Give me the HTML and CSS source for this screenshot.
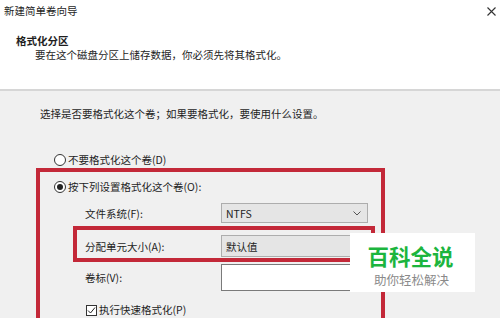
FILE: index.html
```html
<!DOCTYPE html>
<html lang="zh-CN">
  <head>
    <meta charset="UTF-8" />
    <meta name="viewport" content="width=device-width, initial-scale=1.0" />
    <title>新建简单卷向导</title>
    <link rel="stylesheet" href="styles.css">
  </head>
  <body>
    <div class="wizard">
      <div class="top">
        <div class="titlebar">
          <span>新建简单卷向导</span>
          <svg class="close" width="9" height="9" viewBox="0 0 9 9">
            <path d="M0.5 0.5 L8.5 8.5 M8.5 0.5 L0.5 8.5" stroke="#333" stroke-width="1.1" fill="none" />
          </svg>
        </div>
        <h3 class="page-title">格式化分区</h3>
        <p class="page-desc">要在这个磁盘分区上储存数据，你必须先将其格式化。</p>
      </div>

      <div class="content">
        <p class="intro">选择是否要格式化这个卷；如果要格式化，要使用什么设置。</p>

        <label class="radio-row first">
          <span class="radio"></span>不要格式化这个卷(D)
        </label>

        <div class="redbox">
          <label class="radio-row">
            <span class="radio checked"></span>按下列设置格式化这个卷(O):
          </label>

          <div class="form-row fs-row">
            <span>文件系统(F):</span>
            <div class="select">
              NTFS
              <svg width="8" height="5" viewBox="0 0 8 5">
                <path d="M0.5 0.5 L4 4 L7.5 0.5" stroke="#555" stroke-width="1" fill="none" />
              </svg>
            </div>
          </div>

          <div class="form-row redbox-inner">
            <span>分配单元大小(A):</span>
            <div class="select alloc">默认值</div>
          </div>

          <div class="form-row label-row">
            <span>卷标(V):</span>
            <div class="textbox"></div>
          </div>

          <label class="check-row">
            <span class="checkbox">
              <svg width="9" height="9" viewBox="0 0 9 9">
                <path d="M1 4.5 L3.5 7 L8 1.5" stroke="#222" stroke-width="1" fill="none" />
              </svg>
            </span>执行快速格式化(P)
          </label>
        </div>
      </div>
    </div>

    <div class="watermark">
      <div class="wm-title">百科全说</div>
      <div class="wm-sub">助你轻松解决</div>
    </div>
  </body>
</html>
```

FILE: styles.css
```css
* {
  margin: 0px;
  padding: 0px;
  box-sizing: border-box;
}
body {
  width: 500px;
  height: 318px;
  overflow: hidden;
  position: relative;
  background-color: #f0f0f0;
  font-family: "Noto Sans CJK SC", "Microsoft YaHei", sans-serif;
  font-size: 10.5px;
  color: #1e1e1e;
}

.top {
  background-color: #fff;
  height: 91px;
  border-bottom: 2px solid #d6d6d6;
}
.titlebar {
  height: 22px;
  line-height: 22px;
  padding: 0px 2px 0px 4px;
  display: flex;
  justify-content: space-between;
  align-items: center;
}
.close {
  margin-right: 2px;
}
.page-title {
  font-size: 10.5px;
  font-weight: bold;
  line-height: 14px;
  margin-top: 12px;
  padding-left: 16px;
}
.page-desc {
  line-height: 14px;
  padding-left: 35px;
}

.intro {
  line-height: 14px;
  margin-top: 16px;
  padding-left: 40px;
}
.radio-row {
  display: flex;
  align-items: center;
  height: 16px;
  line-height: 16px;
}
.radio-row.first {
  margin-top: 31px;
  padding-left: 54px;
}
.radio {
  width: 12px;
  height: 12px;
  border: 1px solid #333;
  border-radius: 50%;
  background-color: #fff;
  margin-right: 2px;
  display: flex;
  align-items: center;
  justify-content: center;
}
.radio.checked::after {
  content: "";
  width: 6px;
  height: 6px;
  border-radius: 50%;
  background-color: #222;
}

/* the box runs on past the bottom of the window, so no bottom edge */
.redbox {
  margin-left: 36px;
  width: 349px;
  height: 150px;
  border: 4px solid #c32838;
  border-bottom: none;
  padding-top: 7px;
}
.redbox .radio-row {
  padding-left: 14px;
}

.form-row {
  display: grid;
  grid-template-columns: 136px 147px;
  align-items: center;
  padding-left: 45px;
}
.fs-row {
  margin-top: 8px;
}
.select {
  height: 20px;
  background-color: #e5e5e5;
  border: 1px solid #adadad;
  padding: 0px 6px 0px 4px;
  display: flex;
  justify-content: space-between;
  align-items: center;
}
.redbox-inner {
  margin-top: 3px;
  margin-left: 33px;
  width: 302px;
  border: 4px solid #c32838;
  padding: 5px 0px 1px 8px;
}
.select.alloc {
  height: 22px;
}
.label-row {
  margin-top: 2px;
}
.textbox {
  height: 27px;
  background-color: #fff;
  border: 1px solid #7a7a7a;
}

.check-row {
  display: flex;
  align-items: center;
  margin-top: 12px;
  padding-left: 46px;
  line-height: 14px;
}
.checkbox {
  width: 11px;
  height: 11px;
  border: 1px solid #333;
  background-color: #fff;
  margin-right: 2px;
  display: flex;
  align-items: center;
  justify-content: center;
}

.watermark {
  position: absolute;
  left: 350px;
  top: 233px;
  width: 125px;
  height: 59px;
  background-color: #fff;
  text-align: center;
}
.wm-title {
  font-size: 21.5px;
  line-height: 22px;
  margin-top: 12px;
  color: #1cb53e;
  font-weight: bold;
  padding-right: 4px;
}
.wm-sub {
  font-size: 12.5px;
  line-height: 14px;
  margin-top: 6px;
  color: #8a8a8a;
  padding-right: 2px;
}
```
